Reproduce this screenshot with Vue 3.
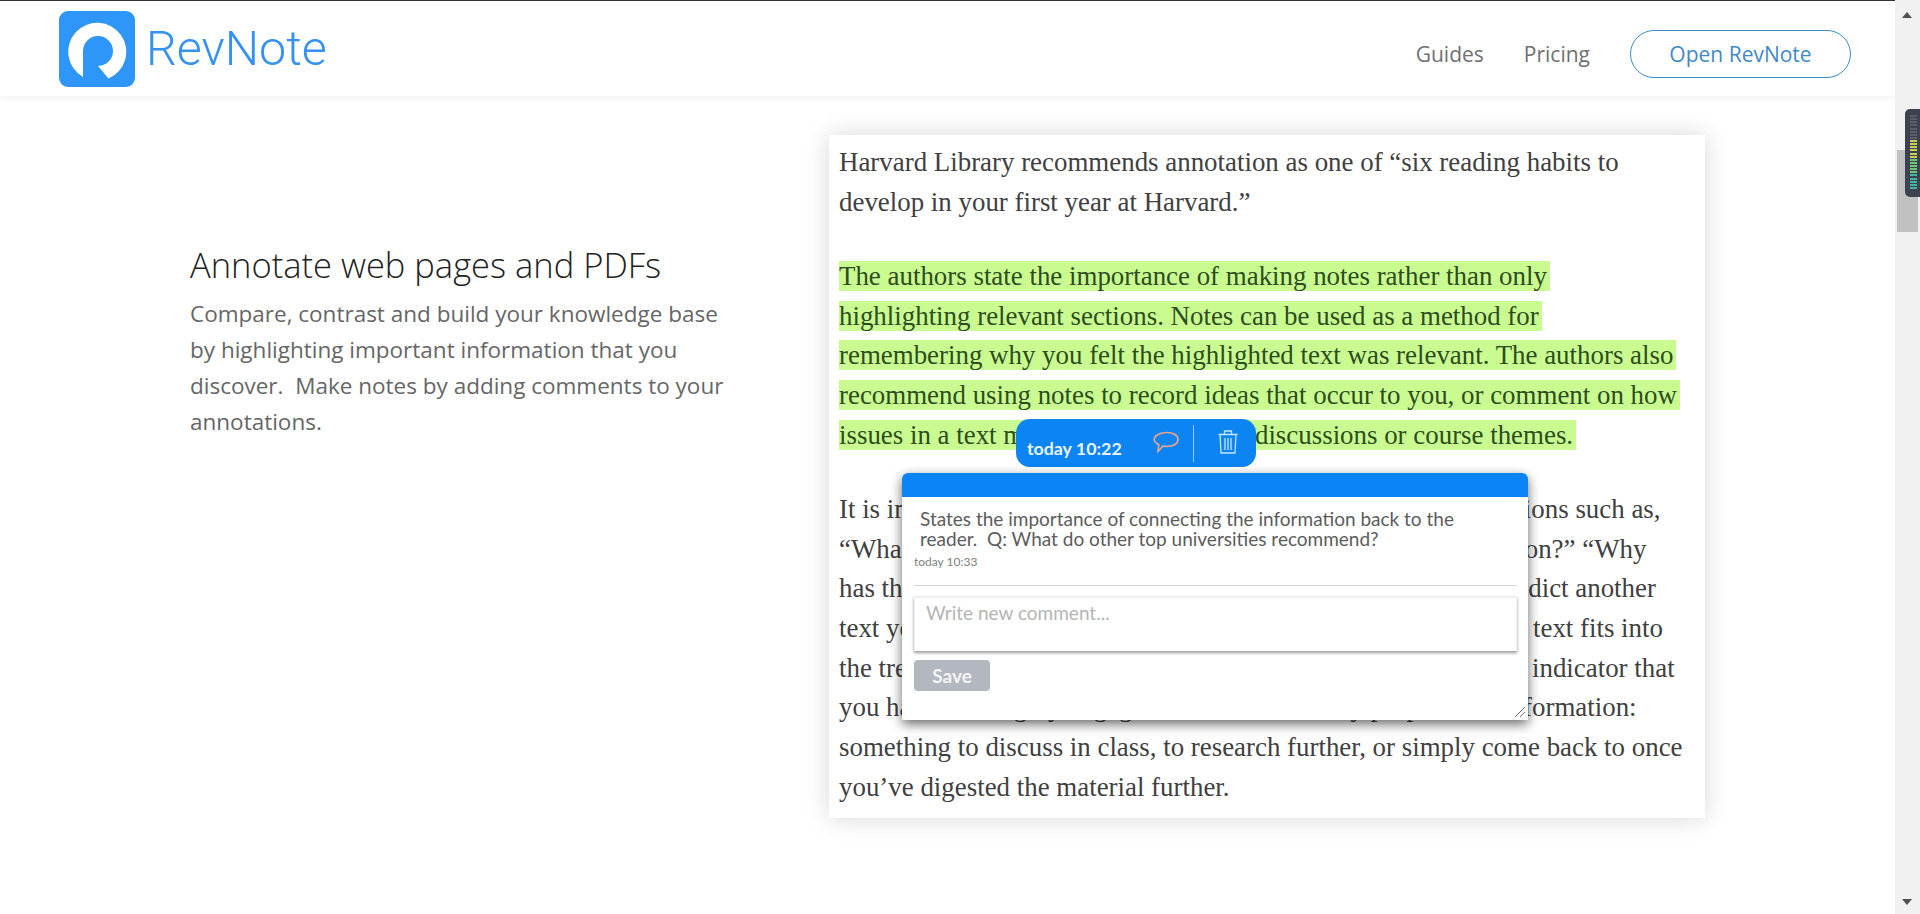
<script setup>
const intro = [
  'Harvard Library recommends annotation as one of “six reading habits to',
  'develop in your first year at Harvard.”'
]
const marked = [
  'The authors state the importance of making notes rather than only',
  'highlighting relevant sections. Notes can be used as a method for',
  'remembering why you felt the highlighted text was relevant. The authors also',
  'recommend using notes to record ideas that occur to you, or comment on how',
  'issues in a text may be related to class discussions or course themes.'
]
const rest = [
  'It is important to read so actively by asking yourself good questions such as,',
  '“What is the author arguing here, and what is the best evidence on?” “Why',
  'has the author chosen this particular example, and does it contradict another',
  'text you have read?” Think now about how and why the present text fits into',
  'the trend of the overall course; asking questions is a really good indicator that',
  'you have thoroughly engaged. Notes serve many purposes of information:',
  'something to discuss in class, to research further, or simply come back to once',
  'you’ve digested the material further.'
]
</script>

<template>
  <div class="page">
    <header class="nav">
      <a class="brand">
        <svg class="logo" viewBox="0 0 76 76" aria-hidden="true">
          <rect width="76" height="76" rx="9" fill="#2e96f8" />
          <path d="M24 66 A29 29 0 1 1 49.5 67.5 L39 55 A15 15 0 1 0 24 40 Z" fill="#fff" />
        </svg>
        <span class="word">RevNote</span>
      </a>
      <nav class="links">
        <a>Guides</a>
        <a>Pricing</a>
        <a class="open">Open RevNote</a>
      </nav>
    </header>
    <main class="feature">
      <section class="copy">
        <h2>Annotate web pages and PDFs</h2>
        <p>Compare, contrast and build your knowledge base<br />by highlighting important information that you<br />discover.&nbsp; Make notes by adding comments to your<br />annotations.</p>
      </section>
      <figure class="shot">
        <p class="para">
          <span v-for="l in intro" :key="l" class="line">{{ l }}</span>
        </p>
        <p class="para">
          <span v-for="l in marked" :key="l" class="line"><mark>{{ l }}</mark></span>
        </p>
        <p class="para">
          <span v-for="l in rest" :key="l" class="line">{{ l }}</span>
        </p>
        <div class="bubble">
          <span class="time">today 10:22</span>
          <svg class="ico" viewBox="0 0 26 22" aria-hidden="true">
            <path d="M14 1.5 C20.5 1.5 25 4.5 25 8.5 C25 12.5 20.5 15.5 14 15.5 C12.5 15.5 11 15.3 10 15 L5 20.5 L5.8 13.5 C3 12.2 1.2 10.5 1.2 8.5 C1.2 4.5 7 1.5 14 1.5 Z" fill="none" stroke="#eca58e" stroke-width="1.6" />
          </svg>
          <span class="sep"></span>
          <svg class="trash" viewBox="0 0 20 24" aria-hidden="true">
            <g fill="none" stroke="#c4e6ff" stroke-width="1.3">
              <path d="M0.5 4.5 H19.5 M6.5 4.5 V1 H13.5 V4.5" />
              <path d="M2 4.5 L3 23 H17 L18 4.5" />
              <path d="M7 8 V20 M10 8 V20 M13 8 V20" />
            </g>
          </svg>
        </div>
        <div class="panel">
          <div class="panel-top"></div>
          <div class="panel-body">
            <p class="comment">States the importance of connecting the information back to the<br />reader.&nbsp; Q: What do other top universities recommend?</p>
            <p class="stamp">today 10:33</p>
            <hr />
            <div class="input">Write new comment...</div>
            <button class="save">Save</button>
          </div>
          <svg class="grip" viewBox="0 0 12 12" aria-hidden="true">
            <path d="M1 11 L11 1 M6 11 L11 6" stroke="#777" stroke-width="1" />
          </svg>
        </div>
      </figure>
    </main>
    <aside class="bar">
      <span class="arrow up"></span>
      <span class="thumb"></span>
      <span class="arrow down"></span>
    </aside>
    <div class="meter">
      <i v-for="n in 24" :key="n" :class="n < 9 ? 'off' : n < 15 ? 'yellow' : n < 20 ? 'green' : 'teal'"></i>
    </div>
  </div>
</template>

<style>
html, body { margin: 0; height: 100%; overflow: hidden; background: #fff; }
</style>

<style scoped>
.page { height: 914px; display: flex; flex-direction: column; padding-right: 25px; box-sizing: border-box; font-family: "Open Sans", sans-serif; background: #fff; }
.nav { height: 96px; border-top: 1px solid #333; box-sizing: border-box; flex: none; display: flex; justify-content: space-between; align-items: center; padding: 0 44px 0 59px; box-shadow: 0 2px 6px rgba(0,0,0,.06); }
.brand { display: flex; align-items: center; gap: 11px; }
.logo { width: 76px; height: 76px; display: block; }
.word { font-family: Roboto, sans-serif; font-weight: 300; font-size: 48.4px; color: #3592f0; }
.links { display: flex; align-items: center; gap: 40px; font-size: 21px; color: #707070; margin-top: 11px; }
.open { width: 221px; height: 48px; box-sizing: border-box; border: 1px solid #3a8cc4; border-radius: 24px; display: flex; align-items: center; justify-content: center; color: #3f88c8; }
.feature { display: flex; align-items: flex-start; padding: 39px 0 0 190px; }
.copy { width: 639px; flex: none; padding-top: 108px; box-sizing: border-box; }
.copy h2 { margin: 0; font-weight: 300; font-size: 34.5px; line-height: 44px; color: #222; }
.copy p { margin: 0; font-size: 22.5px; line-height: 36px; color: #666; padding-top: 9px; }
.shot { position: relative; width: 876px; height: 683px; margin: 0; padding: 8px 10px 0; box-sizing: border-box; box-shadow: 0 0 24px rgba(0,0,0,.16); background: #fff; font-family: "Liberation Serif", serif; font-size: 26.9px; line-height: 39.7px; color: #404040; }
.para { margin: 0 0 34.5px; }
.line { display: block; white-space: nowrap; }
mark { background: #c9fb91; color: #2d4d1e; padding: 0 3px 0 0; }
.bubble { position: absolute; left: 187px; top: 284px; width: 240px; height: 48px; box-sizing: border-box; background: #0c84f2; border-radius: 14px; display: flex; align-items: center; padding: 0 11px; font-family: Lato, sans-serif; color: #e8f4ff; }
.time { font-weight: 700; font-size: 17.8px; line-height: 20px; padding-top: 9px; width: 126px; flex: none; }
.ico { width: 26px; height: 22px; flex: none; margin-top: -2px; }
.sep { width: 1px; height: 37px; background: #9ccdf8; margin: 0 24px 0 14px; flex: none; }
.trash { width: 20px; height: 24px; flex: none; margin-top: -2px; }
.panel { position: absolute; left: 73px; top: 338px; width: 626px; height: 247px; background: #fff; border-radius: 6px 6px 0 0; box-shadow: 0 4px 12px rgba(0,0,0,.6); font-family: Lato, sans-serif; }
.panel-top { height: 24px; background: #0a84f6; border-radius: 6px 6px 0 0; }
.panel-body { padding: 12px 11px 0 12px; }
.comment { margin: 0; padding-left: 6px; font-size: 19px; line-height: 20px; color: #5c5c5c; }
.stamp { margin: 6px 0 0; font-size: 12px; line-height: 14px; color: #808080; }
hr { border: 0; border-top: 1px solid #d4d4d4; margin: 16px 0 11px; }
.input { height: 55px; box-sizing: border-box; padding: 3px 11px; border: 1px solid #f0f0f0; border-bottom: 1px solid #aaa; box-shadow: 0 1px 3px rgba(0,0,0,.4); font-size: 19px; line-height: 24px; color: #b5b5b5; }
.save { display: block; margin-top: 8px; width: 76px; height: 31px; border: 0; border-radius: 4px; background: #b3b7bf; color: #f4f4f4; font-family: Lato, sans-serif; font-size: 19px; font-weight: 700; padding: 0; }
.grip { position: absolute; right: 2px; bottom: 2px; width: 12px; height: 12px; }
.bar { position: fixed; top: 0; right: 0; bottom: 0; width: 25px; background: #f1f1f1; }
.arrow { position: absolute; left: 7px; width: 0; height: 0; border-left: 5px solid transparent; border-right: 5px solid transparent; }
.up { top: 12px; border-bottom: 6px solid #505050; }
.down { bottom: 9px; border-top: 6px solid #505050; }
.thumb { position: absolute; left: 2px; top: 150px; width: 21px; height: 82px; background: #c1c1c1; }
.meter { position: fixed; right: 0; top: 109px; width: 15px; height: 88px; box-sizing: border-box; background: #3c4250; border-radius: 5px 0 0 5px; padding: 6px 3px 8px 5px; display: flex; flex-direction: column; justify-content: space-between; }
.meter i { display: block; height: 2px; }
.off { background: #59606c; }
.yellow { background: #c9cf50; }
.green { background: #6fc77a; }
.teal { background: #3fb5a3; }
</style>
